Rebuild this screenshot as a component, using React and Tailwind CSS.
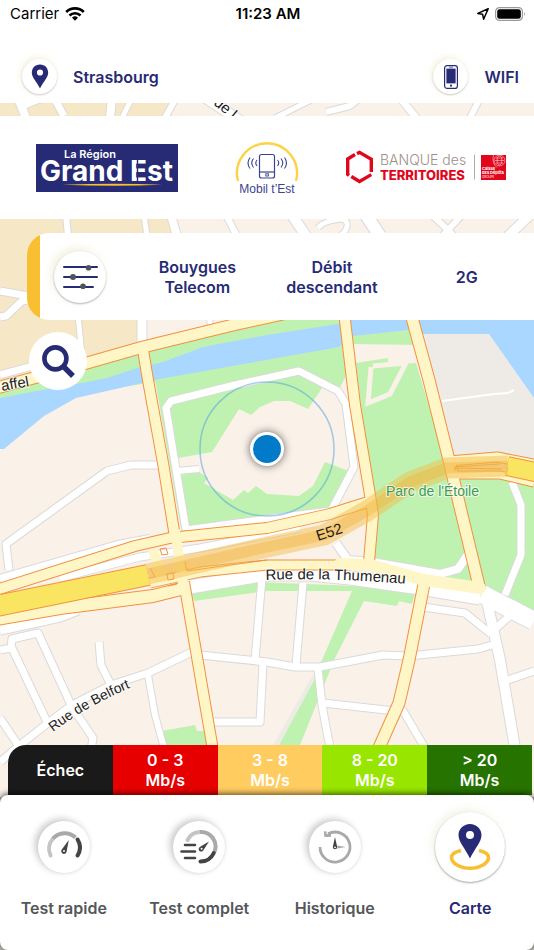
import clsx from 'clsx';

const NAVY = '#272a74';

const STREETS = [
    { d: 'M18 98 L26 118', w: 8 },
    { d: 'M20 108 Q40 96 54 98 L64 116', w: 7 },
    { d: 'M112 98 L110 118', w: 8 },
    { d: 'M122 118 L132 98', w: 5 },
    { d: 'M165 118 L176 98', w: 6 },
    { d: 'M206 98 L242 122', w: 10 },
    { d: 'M275 118 L315 98', w: 5 },
    { d: 'M326 112 L350 106 L360 98', w: 6 },
    { d: 'M400 98 L418 120', w: 7 },
    { d: 'M480 98 L470 118', w: 6 },
    { d: 'M66 215 L68 236', w: 6 },
    { d: 'M144 215 L147 236', w: 5 },
    { d: 'M171 215 L177 236', w: 8 },
    { d: 'M226 215 L237 236', w: 6 },
    { d: 'M292 215 L306 236', w: 10 },
    { d: 'M318 228 Q324 220 344 219 Q352 226 340 236', w: 5 },
    { d: 'M366 215 L380 236', w: 12 },
    { d: 'M432 215 L448 230 L440 238 M448 230 L462 215 M448 230 L456 238', w: 6 },
    { d: 'M530 215 L506 238', w: 9 },
    { d: 'M0 291 L34 297 M0 317 L6 316 L22 301 L34 299', w: 7 },
    { d: 'M78 316 L82 355', w: 5 },
    { d: 'M142 316 L142 345', w: 9 },
    { d: 'M209 316 L211 328', w: 5 },
    { d: 'M0 375 L40 364', w: 7 },
    { d: 'M186 530 L166 408 L171 401 L235 385 L299 371 L338 391 L346 404 L354 467 L331 511 L267 519 L186 530', w: 7 },
    { d: 'M177 471 L199 469', w: 6 },
    { d: 'M9 570 L6 544 L107 471 L131 465 L158 465', w: 7 },
    { d: 'M0 580 L118 546 L150 540', w: 10 },
    { d: 'M60 578 L140 557 L200 548 L300 528', w: 7 },
    { d: 'M0 630 L60 617 L78 610', w: 9 },
    { d: 'M190 587 L267 574 L310 574 L350 578 L420 588 L480 598', w: 13 },
    { d: 'M336 543 L348 560 L372 562 L440 574 L458 569 L469 553', w: 8 },
    { d: 'M512 482 L521 505 L521 555 L505 595', w: 7 },
    { d: 'M482 594 L534 621', w: 18 },
    { d: 'M0 650 L11 648 L12 639 L38 633 L72 707 L93 738 L91 750', w: 7 },
    { d: 'M12 648 L48 724', w: 7 },
    { d: 'M0 762 L20 745 L48 723 L72 705 L111 685 L148 673 L192 652', w: 7 },
    { d: 'M99 642 L101 665 L111 685', w: 7 },
    { d: 'M148 675 L155 715 L164 748', w: 6 },
    { d: 'M0 718 L20 748', w: 7 },
    { d: 'M200 655 L267 662 L295 667 L320 667 L383 655 L409 656 L478 649 L492 645', w: 7 },
    { d: 'M262 578 L255 660', w: 7 },
    { d: 'M263 663 L260 722 L212 722', w: 7 },
    { d: 'M303 583 L296 665', w: 7 },
    { d: 'M318 669 L322 705 L330 748', w: 7 },
    { d: 'M323 703 L395 711', w: 7 },
    { d: 'M402 709 L425 748', w: 7 },
    { d: 'M423 607 L465 613 L491 634', w: 7 },
    { d: 'M486 597 L500 660 L515 748', w: 10 },
    { d: 'M496 628 L512 614', w: 7 },
    { d: 'M508 680 L534 671', w: 7 },
];

const AVENUES = [
    { d: 'M-4 388 L30 379 L87 363 L143 347 L233 325 L310 308', w: 11 },
    { d: 'M143 350 L148 380 L163 463 L175 537', w: 10 },
    { d: 'M184 582 L197 657 L213 750', w: 10 },
    { d: 'M344 312 L355 405 L370 495 L373 515 L369 562', w: 10 },
    { d: 'M411 314 L429 380 L449 460 L460 507 L480 590', w: 11 },
    { d: 'M424 584 L409 660 L399 703 L378 750', w: 11 },
    { d: 'M-4 590 L135 546 L170 538 L267 528 L330 514 L368 502', w: 10 },
    { d: 'M-4 619 L60 608 L153 596 L185 588', w: 12 },
    { d: 'M150 583 L200 572 L267 565 L350 565', w: 9 },
    { d: 'M449 461 L497 457 L534 464', w: 9 },
    { d: 'M456 475 L500 475 L534 483', w: 7 },
];

const LEGEND = [
    { label: ['Échec'], color: 'bg-[#1a1a1a]' },
    { label: ['0 - 3', 'Mb/s'], color: 'bg-[#e60000]' },
    { label: ['3 - 8', 'Mb/s'], color: 'bg-[#ffcc60]' },
    { label: ['8 - 20', 'Mb/s'], color: 'bg-[#98e600]' },
    { label: ['> 20', 'Mb/s'], color: 'bg-[#267300]' },
];

const MapView = () => (
    <svg
        className="absolute inset-0 -z-10 h-full w-full"
        viewBox="0 0 534 950"
        preserveAspectRatio="xMidYMid slice"
        fontFamily='"Liberation Sans", Arial, sans-serif'
    >
        <rect width="534" height="950" fill="#faf1e9" />
        <path d="M0 90 H172 V240 L146 320 L142 348 L0 386 Z" fill="#f6e8c6" />
        <path d="M424 334 H489 L534 398 V470 H452 Z" fill="#eeebe7" />

        {/* river and banks */}
        <path d="M0 387 L143 347 L300 312 H420 L420 345 L352 344 L339 350 L155 382 L40 400 L0 404 Z" fill="#bff2b1" />
        <path d="M0 398 L42 390 L87 382 L107 378 L137 368 L163 362 L203 347 L267 335 L338 324 L350 316 H534 V398 L489 334 H422 L408 330 L353 337 L339 347 L267 360 L155 380 L142 383 L76 398 L44 416 L4 449 H0 Z" fill="#a9d7ff" />

        {/* parks */}
        <path d="M155 380 L267 360 L342 347 L347 374 L338 391 L354 467 L331 511 L267 522 L182 534 Z" fill="#bff2b1" />
        <path d="M178 458 L212 452 L239 409 L251 415 L260 407 L274 401 L290 401 L308 409 L322 388 L340 394 L350 468 L346 470 L325 462 L313 486 L299 496 L267 494 L256 486 L248 493 L244 490 L233 500 L204 483 L208 478 L199 472 L180 475 Z" fill="#faf1e9" />
        <path d="M353 336 L410 330 L414 340 L354 344 Z" fill="#bff2b1" />
        <path d="M356 363 L388 358 V362 L400 364 L416 363 L448 470 L480 590 L372 562 L373 505 Z" fill="#bff2b1" />
        <path d="M371 367 L368 403 L390 394 L406 363 L373 366" fill="none" stroke="#faf1e9" strokeWidth="5" />
        <path d="M455 474 L534 484 V615 L482 590 Z" fill="#bff2b1" />
        <path d="M192 593 L258 582 L354 586 L417 587 L412 604 L399 601 L397 606 L364 601 L335 658 L300 745 H279 L322 660 L352 591 L267 591 L194 601 Z" fill="#bff2b1" />
        <path d="M162 731 L195 725 L197 731 H210 V748 H165 Z" fill="#bff2b1" />
        <path d="M312 676 L316 677 L279 745 H273 Z" fill="#eeebe7" />
        <path d="M442 401 L494 394 L508 393 L514 390" fill="none" stroke="#fff" strokeWidth="2" />

        <g fill="none" strokeLinejoin="round">
            {STREETS.map((s) => <path key={s.d} d={s.d} stroke="#dadada" strokeWidth={s.w + 2} />)}
            {STREETS.map((s) => <path key={s.d} d={s.d} stroke="#fff" strokeWidth={s.w} />)}
            {AVENUES.map((s) => <path key={s.d} d={s.d} stroke="#f3903f" strokeWidth={s.w + 2} />)}
            {AVENUES.map((s) => <path key={s.d} d={s.d} stroke="#fff6c8" strokeWidth={s.w} />)}
            <path d="M340 564 L370 565 L424 580 L480 588" stroke="#fff6c8" strokeWidth="12" strokeLinecap="round" />
            <path d="M175 530 L184 590 M153 549 L162 580" stroke="#fff6c8" strokeWidth="10" />
        </g>

        {/* E52 */}
        <g fill="none" strokeLinejoin="round">
            <path d="M-4 606 L148 575" stroke="#f3903f" strokeWidth="22" />
            <path d="M-4 606 L148 575" stroke="#fae562" strokeWidth="20" />
            <path d="M507 466 L540 473" stroke="#f3903f" strokeWidth="20" />
            <path d="M507 466 L540 473" stroke="#fae562" strokeWidth="18" />
            <path d="M160 549 L166 548 L168 554 L162 555 Z M167 574 L173 573 L174 579 L168 580 Z M185 562 L187 571 L267 560 M454 467 L500 464 M455 471 L455 468 L502 469 M150 568 L155 577 M168 586 L177 584" stroke="#f3903f" strokeWidth="1" />
            <path d="M148 574 L267 547 L324 535 L367 511 L410 482 L447 468 L508 466" stroke="#f4bd4c" strokeOpacity="0.5" strokeWidth="21" />
            <path d="M148 574 L267 547 L324 535 L367 511 L410 482 L447 468 L508 466" stroke="#f2b53a" strokeOpacity="0.4" strokeWidth="11" />
        </g>

        <circle cx="267" cy="449" r="67" fill="none" stroke="#4a9fe0" strokeOpacity="0.5" strokeWidth="1.5" />
        <circle cx="267" cy="449" r="17" fill="#fff" className="drop-shadow-[0_0_4px_rgba(0,0,0,0.6)]" />
        <circle cx="267" cy="449" r="14" fill="#007ac9" />

        <defs>
            <path id="thumenau" d="M266 580 Q330 577 420 585" />
            <path id="belfort" d="M53 732 Q90 703 145 682" />
        </defs>
        <g fontSize="15" fill="#1c1c1c" stroke="#fff" strokeOpacity="0.7" strokeWidth="2" paintOrder="stroke">
            <text><textPath href="#thumenau">Rue de la Thumenau</textPath></text>
            <text fontSize="14"><textPath href="#belfort">Rue de Belfort</textPath></text>
            <text transform="translate(318 541) rotate(-18)" strokeOpacity="0">E52</text>
            <text transform="translate(2 391) rotate(-10)">affel</text>
            <text transform="translate(213 104) rotate(40)">de l</text>
            <text x="386" y="496" fontSize="14" fill="#409a55">Parc de l'Étoile</text>
        </g>
        <path d="M0 797 H534 V950 H0 Z" fill="#b9b9b4" />
    </svg>
);

const Pin = ({ className }) => (
    <svg className={className} viewBox="0 0 18 26" fill={NAVY}>
        <path fillRule="evenodd" d="M9 0.5 C4 0.5 0.5 4.2 0.5 9 C0.5 14 5.5 18 9 25.5 C12.5 18 17.5 14 17.5 9 C17.5 4.2 14 0.5 9 0.5 Z M9 5.6 A3.2 3.2 0 1 1 9 12 A3.2 3.2 0 1 1 9 5.6 Z" />
    </svg>
);

const StatusBar = () => (
    <div className="grid h-7 grid-cols-3 items-center pl-[10px] pr-2 text-[15px] text-black">
        <div className="flex items-center gap-[6px]">
            <span>Carrier</span>
            <svg className="h-[14px] w-5" viewBox="0 0 20 14" fill="none" stroke="#000" strokeWidth="2.6">
                <path d="M1.2 5 A12.6 12.6 0 0 1 18.8 5" />
                <path d="M4.5 8.5 A7.8 7.8 0 0 1 15.5 8.5" />
                <path d="M10 13.8 L7 10.8 A4.3 4.3 0 0 1 13 10.8 Z" fill="#000" stroke="none" />
            </svg>
        </div>
        <span className="text-center font-semibold">11:23 AM</span>
        <div className="flex items-center justify-end gap-[6px]">
            <svg className="h-3 w-3" viewBox="0 0 12 12" fill="none" stroke="#000" strokeWidth="1.5" strokeLinejoin="round">
                <path d="M11.2 0.8 L0.8 5.4 L5.6 6.3 L6.6 11.2 Z" />
            </svg>
            <svg className="h-[14px] w-[31px]" viewBox="0 0 31 14">
                <rect x="0.6" y="0.6" width="26.8" height="12.8" rx="4" fill="none" stroke="#999" strokeWidth="1.2" />
                <rect x="2.2" y="2.2" width="23.6" height="9.6" rx="2.4" fill="#000" />
                <path d="M29 4.8 Q30.8 7 29 9.2 Z" fill="#999" />
            </svg>
        </div>
    </div>
);

const Header = () => (
    <header className="bg-white pb-[9px] text-[#272a74]">
        <StatusBar />
        <div className="mt-[31px] flex items-center justify-between pl-[22px] pr-[15px] font-semibold">
            <div className="flex items-center gap-4">
                <span className="flex h-[35px] w-[35px] items-center justify-center rounded-full bg-white shadow-[0_1px_2px_rgba(0,0,0,0.2),-2px_-2px_6px_rgba(240,235,200,0.6)]">
                    <Pin className="h-[25px] w-[18px]" />
                </span>
                Strasbourg
            </div>
            <div className="flex items-center gap-4">
                <span className="flex h-[35px] w-[35px] items-center justify-center rounded-full bg-white shadow-[0_1px_2px_rgba(0,0,0,0.2),-2px_-2px_6px_rgba(240,235,200,0.6)]">
                    <svg className="h-6 w-[14px]" viewBox="0 0 14 24">
                        <rect x="0.6" y="0.6" width="12.8" height="22.8" rx="2.5" fill="#fff" stroke={NAVY} strokeWidth="1.2" />
                        <rect x="2.4" y="3.6" width="9.2" height="14.8" fill={NAVY} />
                        <path d="M5 2.2 H9" stroke={NAVY} strokeWidth="0.7" />
                        <circle cx="7" cy="20.7" r="1.1" fill={NAVY} />
                    </svg>
                </span>
                WIFI
            </div>
        </div>
    </header>
);

const GrandEstLogo = () => (
    <svg className="h-12 w-[142px]" viewBox="0 0 142 48" fill="#fff" fontFamily="Inter, sans-serif">
        <rect width="142" height="48" fill={NAVY} />
        <text x="28" y="14" fontSize="11" fontWeight="600">La Région</text>
        <text x="4" y="37" fontSize="28" fontWeight="700">Grand</text>
        <text x="94" y="37" fontSize="28" fontWeight="700">Est</text>
        <path d="M101.5 16 V38" stroke={NAVY} strokeWidth="1.4" />
        <path d="M26 40.8 Q80 38.8 126 40.8 Q80 42.6 26 40.8 Z" fill="#fbc02d" />
    </svg>
);

const MobilEstLogo = () => (
    <svg className="ml-[10px] h-[56px] w-16" viewBox="0 0 64 56" fill="none" stroke="#3c4390">
        <path d="M3 41 A30 30 0 1 1 61 41" stroke="#fdd344" strokeWidth="2.4" />
        <rect x="24.5" y="14.5" width="15" height="23.5" rx="2" strokeWidth="1.2" />
        <path d="M24.5 32 H39.5" strokeWidth="1.2" />
        <rect x="30.8" y="33.8" width="2.6" height="2.2" strokeWidth="0.9" />
        <path d="M22 20 Q19.5 23 22 26 M18.5 18.5 Q15 23 18.5 27.5 M15 17.5 Q11 23 15 28.5 M42.5 20 Q45 23 42.5 26 M46 18.5 Q49.5 23 46 27.5 M49.5 17.5 Q53.5 23 49.5 28.5" strokeWidth="1.1" />
        <text x="32" y="53" textAnchor="middle" fontSize="12" fill="#3c4390" stroke="none" fontFamily='"Liberation Sans", Arial, sans-serif'>Mobil t’Est</text>
    </svg>
);

const BanqueLogo = () => (
    <svg className="h-9 w-[162px]" viewBox="0 0 162 36" fontFamily="Inter, sans-serif">
        <g fill="none" stroke="#e2061c" strokeWidth="3.4">
            <path d="M10 4.5 L2.7 9 V24.5 L4 25.5" />
            <path d="M12 3.6 L14.5 2.4 L26.3 9.2 V22" />
            <path d="M6.3 26.5 L14.5 31.5 L26.3 24.6" />
        </g>
        <text x="35" y="15" fontSize="14" fontWeight="300" fill="#9b8f87">BANQUE des</text>
        <text x="35" y="30" fontSize="13" fontWeight="800" fill="#e2061c">TERRITOIRES</text>
        <path d="M129.5 4.5 V29.5" stroke="#b3aaa3" />
        <rect x="136" y="5" width="25" height="25" fill="#e2061c" />
        <g fill="none" stroke="#fff" strokeOpacity="0.6" strokeWidth="0.8">
            <circle cx="154.5" cy="10.5" r="5.4" />
            <ellipse cx="154.5" cy="10.5" rx="2.4" ry="4.4" />
            <path d="M150 10.5 H159 M151 8 H158 M151 13 H158 M148.5 5 Q146.5 13 152 17.5" />
        </g>
        <g fill="#fff" fontWeight="700" fontSize="4">
            <text x="137" y="20">Caisse</text>
            <text x="137" y="24.4">des Dépôts</text>
            <text x="137" y="28" fontSize="3" fontWeight="400">GROUPE</text>
        </g>
    </svg>
);

const Filters = () => (
    <section className="mt-[14px] ml-[27px] flex h-[87px] items-center overflow-hidden rounded-l-[22px] bg-white font-semibold leading-5 text-[#272a74]">
        <div className="w-[13px] self-stretch bg-[#f9bf33]"></div>
        <button
            aria-label="Filtres"
            className="ml-[14px] mr-6 flex h-[52px] w-[52px] shrink-0 items-center justify-center rounded-full bg-white shadow-[0_1px_2px_rgba(0,0,0,0.3),-3px_-3px_8px_rgba(235,230,200,0.6)]"
        >
            <svg className="h-6 w-[35px]" viewBox="0 0 35 24">
                <path d="M1 2 H34 M1 12 H34 M1 22 H30" stroke={NAVY} strokeWidth="2" strokeLinecap="round" />
                <g fill="#4d5657">
                    <circle cx="25.5" cy="2.8" r="2.8" />
                    <circle cx="10" cy="12" r="3" />
                    <circle cx="20" cy="21.2" r="2.8" />
                </g>
            </svg>
        </button>
        <div className="grid flex-1 grid-cols-3 items-center">
            <button className="px-4">Bouygues Telecom</button>
            <button className="px-4">Débit descendant</button>
            <button className="px-4">2G</button>
        </div>
    </section>
);

const Legend = () => (
    <ul className="ml-2 mr-[2px] grid h-[50px] grid-cols-5 overflow-hidden rounded-tl-[18px] font-semibold leading-5 text-white">
        {LEGEND.map((item) => (
            <li key={item.color} className={clsx('flex flex-col items-center justify-center', item.color)}>
                {item.label.map((line) => <span key={line}>{line}</span>)}
            </li>
        ))}
    </ul>
);

const QuickIcon = () => (
    <svg className="h-9 w-9" viewBox="0 0 36 36" fill="none" strokeWidth="4" strokeLinecap="round">
        <path d="M4.6 26.5 A15.5 15.5 0 0 1 7 9.5" stroke="#c4c4c4" />
        <path d="M7 9.5 A15.5 15.5 0 0 1 29.5 8.5" stroke="#a9a9a9" strokeLinecap="butt" />
        <path d="M31.6 10.5 A15.5 15.5 0 0 1 31.6 26.5" stroke="#444" />
        <path d="M22.8 11 L20.6 22.5 A2.7 2.7 0 1 1 15.6 20.8 Z" fill="#444" />
        <circle cx="18" cy="22" r="1" fill="#fff" />
    </svg>
);

const FullIcon = () => (
    <svg className="h-9 w-10" viewBox="0 0 40 36" fill="none" strokeLinecap="round">
        <path d="M8.5 11 A14.5 14.5 0 0 1 21 3" stroke="#c4c4c4" strokeWidth="4" />
        <path d="M21 3 A14.5 14.5 0 0 1 35.4 23" stroke="#a9a9a9" strokeWidth="4" strokeLinecap="butt" />
        <path d="M34.8 24 A14.5 14.5 0 0 1 21.5 32.5" stroke="#444" strokeWidth="4" />
        <path d="M6 16 H16 M2.5 22.5 H16 M6 29 H16" stroke="#444" strokeWidth="2.6" />
        <path d="M30 12.5 L24.5 21 A2.5 2.5 0 1 1 21.2 17.8 Z" fill="#444" />
        <circle cx="22.6" cy="19.8" r="1" fill="#fff" />
    </svg>
);

const HistoryIcon = () => (
    <svg className="h-9 w-9" viewBox="0 0 36 36" fill="none">
        <path d="M3 18 A15 15 0 1 0 11 4.8" stroke="#a9a9a9" strokeWidth="2.8" />
        <path d="M8 2.4 L8.6 6.6 L14 6.4" stroke="#a9a9a9" strokeWidth="2.6" />
        <path d="M18 8 L20.2 18 A2.2 2.2 0 1 1 15.8 18 Z" fill="#444" />
        <path d="M20.3 16.4 L29 18 L20.3 19.4 Z" fill="#a9a9a9" />
        <circle cx="18" cy="18.3" r="0.9" fill="#fff" />
    </svg>
);

const MapIcon = () => (
    <svg className="h-12 w-11" viewBox="0 0 44 48" fill="none">
        <path d="M13 27.5 C6 29 3.5 32 3.5 34.5 C3.5 40 12 45.3 22 45.3 C32 45.3 40.5 40 40.5 34.5 C40.5 32 38 29 31 27.5" stroke="#f9bf33" strokeWidth="3.6" />
        <path fillRule="evenodd" d="M22 1 C15.5 1 10.5 6 10.5 12 C10.5 19 17 25 22 35.5 C27 25 33.5 19 33.5 12 C33.5 6 28.5 1 22 1 Z M22 8 A4 4 0 1 1 22 16 A4 4 0 1 1 22 8 Z" fill={NAVY} />
    </svg>
);

const TABS = [
    { label: 'Test rapide', icon: QuickIcon },
    { label: 'Test complet', icon: FullIcon },
    { label: 'Historique', icon: HistoryIcon },
    { label: 'Carte', icon: MapIcon, active: true },
];

const BottomNav = () => (
    <nav className="relative h-[155px] overflow-hidden rounded-lg bg-white pt-[15px] shadow-[0_-1px_6px_rgba(0,0,0,0.7)]">
        <div className="-mx-1 grid grid-cols-4">
            {TABS.map(({ label, icon: Icon, active }) => (
                <button
                    key={label}
                    className={clsx('flex flex-col items-center gap-3 font-semibold', active ? 'text-[#272a74]' : 'text-[#55565a]')}
                >
                    <span className="flex h-[74px] items-center">
                        <span
                            className={clsx(
                                'flex items-center justify-center rounded-full bg-white',
                                active
                                    ? 'h-[70px] w-[70px] shadow-[0_1px_2px_rgba(0,0,0,0.35),-3px_-3px_8px_rgba(235,235,215,0.6)]'
                                    : 'h-[52px] w-[52px] shadow-[-3px_-2px_7px_rgba(0,0,0,0.22),1px_1px_3px_rgba(0,0,0,0.06)]'
                            )}
                        >
                            <Icon />
                        </span>
                    </span>
                    {label}
                </button>
            ))}
        </div>
    </nav>
);

export default function App() {
    return (
        <div className="relative isolate flex min-h-screen flex-col overflow-hidden font-['Inter',sans-serif] text-base">
            <MapView />
            <Header />
            <section className="mt-[13px] flex h-[103px] items-center justify-between bg-white pl-9 pr-[27px]">
                <GrandEstLogo />
                <MobilEstLogo />
                <BanqueLogo />
            </section>
            <Filters />
            <button aria-label="Rechercher" className="mt-3 ml-[29px] flex h-[58px] w-[58px] items-center justify-center rounded-full bg-white">
                <svg className="h-[33px] w-[33px]" viewBox="0 0 33 33" fill="none" stroke={NAVY} strokeWidth="4.6">
                    <circle cx="13.4" cy="13.4" r="11" />
                    <path d="M21 21 L31 31" strokeWidth="5.4" />
                </svg>
            </button>
            <div className="flex-1"></div>
            <Legend />
            <BottomNav />
        </div>
    );
}
